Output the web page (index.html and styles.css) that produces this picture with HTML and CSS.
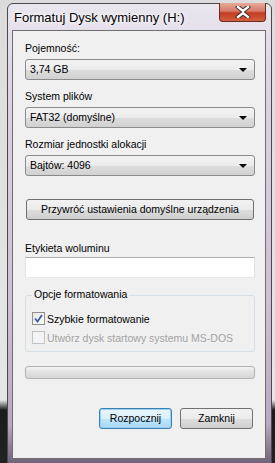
FILE: index.html
```html
<!DOCTYPE html>
<html lang="pl">
<head>
  <meta charset="UTF-8" />
  <title>Formatuj Dysk wymienny (H:)</title>
  <link rel="stylesheet" href="styles.css">
</head>
<body>
  <div class="desk">
    <div class="window">
      <div class="titlebar">
        <span class="title">Formatuj Dysk wymienny (H:)</span>
        <div class="close">
          <svg width="16" height="12" viewBox="0 0 16 12">
            <path d="M3 1 L8 5 L13 1 M3 11 L8 7 L13 11" stroke="#3a2a2a" stroke-width="4.2" fill="none" stroke-linecap="square"/>
            <path d="M3 1 L8 5 L13 1 M3 11 L8 7 L13 11" stroke="#fff" stroke-width="2.4" fill="none" stroke-linecap="square"/>
          </svg>
        </div>
      </div>
      <div class="client">
        <div class="label first">Pojemność:</div>
        <div class="combo">3,74 GB<span class="arrow"></span></div>

        <div class="label">System plików</div>
        <div class="combo">FAT32 (domyślne)<span class="arrow"></span></div>

        <div class="label">Rozmiar jednostki alokacji</div>
        <div class="combo">Bajtów: 4096<span class="arrow"></span></div>

        <div class="btn wide">Przywróć ustawienia domyślne urządzenia</div>

        <div class="label vol">Etykieta woluminu</div>
        <div class="textbox"></div>

        <div class="group">
          <span class="legend">Opcje formatowania</span>
          <div class="check">
            <span class="box checked">
              <svg width="9" height="9" viewBox="0 0 9 9">
                <path d="M1 4.5 L3.5 7.5 L8 1" stroke="#3b5aa8" stroke-width="1.8" fill="none"/>
              </svg>
            </span>
            Szybkie formatowanie
          </div>
          <div class="check disabled">
            <span class="box"></span>
            Utwórz dysk startowy systemu MS-DOS
          </div>
        </div>

        <div class="progress"></div>

        <div class="actions">
          <div class="btn default">Rozpocznij</div>
          <div class="btn">Zamknij</div>
        </div>
      </div>
    </div>
  </div>
</body>
</html>
```

FILE: styles.css
```css
html, body {
  margin: 0;
  padding: 0;
}
body {
  width: 275px;
  height: 463px;
  overflow: hidden;
  font-family: "Liberation Sans", "Noto Sans", sans-serif;
  font-size: 10.5px;
  color: #000;
  background: linear-gradient(to bottom, #dcdcdc 0, #e6e6e6 400px, #1b1b1b 410px, #222 463px);
}
.desk {
  padding: 3px 3px 0 7px;
}
.window {
  width: 265px;
  height: 470px;
  box-sizing: border-box;
  border: 1px solid #4a4a4a;
  border-radius: 6px 6px 0 0;
  background: linear-gradient(to bottom, #e9e6ee 0, #ddd3e4 80px, #cdbfd6 300px, #b9a8c4 420px, #5c4f63 470px);
  padding: 0 5px 0 4px;
}
.titlebar {
  height: 26px;
  display: flex;
  justify-content: space-between;
  align-items: flex-start;
}
.title {
  padding: 6px 0 0 2px;
  font-size: 13px;
  color: #000;
  text-shadow: 0 0 6px #fff, 0 0 3px #fff;
}
.close {
  width: 47px;
  height: 19px;
  box-sizing: border-box;
  margin-top: -1px;
  border: 1px solid #6d2a22;
  border-top: none;
  border-radius: 0 0 4px 4px;
  background: linear-gradient(to bottom, #e7a99c 0, #d67b6a 45%, #c33c24 55%, #d2603f 100%);
  display: flex;
  align-items: center;
  justify-content: center;
}
.client {
  height: 429px;
  box-sizing: border-box;
  border: 1px solid #6e6e6e;
  background: #f0f0f0;
  padding: 10px 10px 0 12px;
}
.label {
  height: 15px;
  line-height: 15px;
  margin: 9px 0 3px;
}
.label.first {
  margin-top: 0;
}
.label.vol {
  margin-top: 21px;
  margin-bottom: 1px;
}
.combo {
  height: 21px;
  box-sizing: border-box;
  border: 1px solid #8a8a8a;
  border-radius: 3px;
  background: linear-gradient(to bottom, #f3f3f3 0, #ebebeb 50%, #dddddd 51%, #d1d1d1 100%);
  padding: 0 4px;
  line-height: 19px;
  display: flex;
  justify-content: space-between;
  align-items: center;
}
.arrow {
  width: 0;
  height: 0;
  border-left: 4px solid transparent;
  border-right: 4px solid transparent;
  border-top: 4px solid #000;
  margin-right: 3px;
}
.btn {
  height: 21px;
  box-sizing: border-box;
  border: 1px solid #707070;
  border-radius: 3px;
  background: linear-gradient(to bottom, #f2f2f2 0, #ebebeb 50%, #dddddd 51%, #cfcfcf 100%);
  text-align: center;
  line-height: 19px;
  color: #000;
  white-space: nowrap;
}
.btn.wide {
  margin: 23px 1px 0;
}
.textbox {
  height: 21px;
  box-sizing: border-box;
  background: #fff;
  border: 1px solid #abadb3;
  border-left-color: #e2e3ea;
  border-right-color: #dbdfe6;
  border-bottom-color: #e3e9ef;
}
.group {
  position: relative;
  margin-top: 17px;
  height: 57px;
  box-sizing: border-box;
  border: 1px solid #d5dfe5;
  border-radius: 3px;
  padding: 13px 0 0 6px;
}
.legend {
  position: absolute;
  top: -9px;
  left: 6px;
  padding: 0 2px;
  background: #f0f0f0;
  line-height: 15px;
}
.check {
  display: flex;
  align-items: center;
  gap: 2px;
  height: 19px;
  white-space: nowrap;
}
.check.disabled {
  color: #a3a3a3;
}
.box {
  width: 13px;
  height: 13px;
  box-sizing: border-box;
  border: 1px solid #8e8f8f;
  background: linear-gradient(135deg, #e6e6e6, #fcfcfc);
  display: flex;
  align-items: center;
  justify-content: center;
}
.check.disabled .box {
  border-color: #c2c2c2;
  background: #f4f4f4;
}
.progress {
  margin-top: 14px;
  height: 13px;
  box-sizing: border-box;
  border: 1px solid #b2b2b2;
  border-radius: 3px;
  background: linear-gradient(to bottom, #f2f2f2 0, #e1e1e1 50%, #d6d6d6 100%);
}
.actions {
  display: flex;
  justify-content: flex-end;
  gap: 8px;
  margin-top: 29px;
  padding-right: 2px;
}
.actions .btn {
  width: 73px;
  height: 21px;
}
.btn.default {
  border-color: #3c7fb1;
  box-shadow: inset 0 0 0 1px #9ad1f2;
  background: linear-gradient(to bottom, #eaf6fd 0, #d9f0fc 50%, #bee6fd 51%, #a7d9f5 100%);
}
```
